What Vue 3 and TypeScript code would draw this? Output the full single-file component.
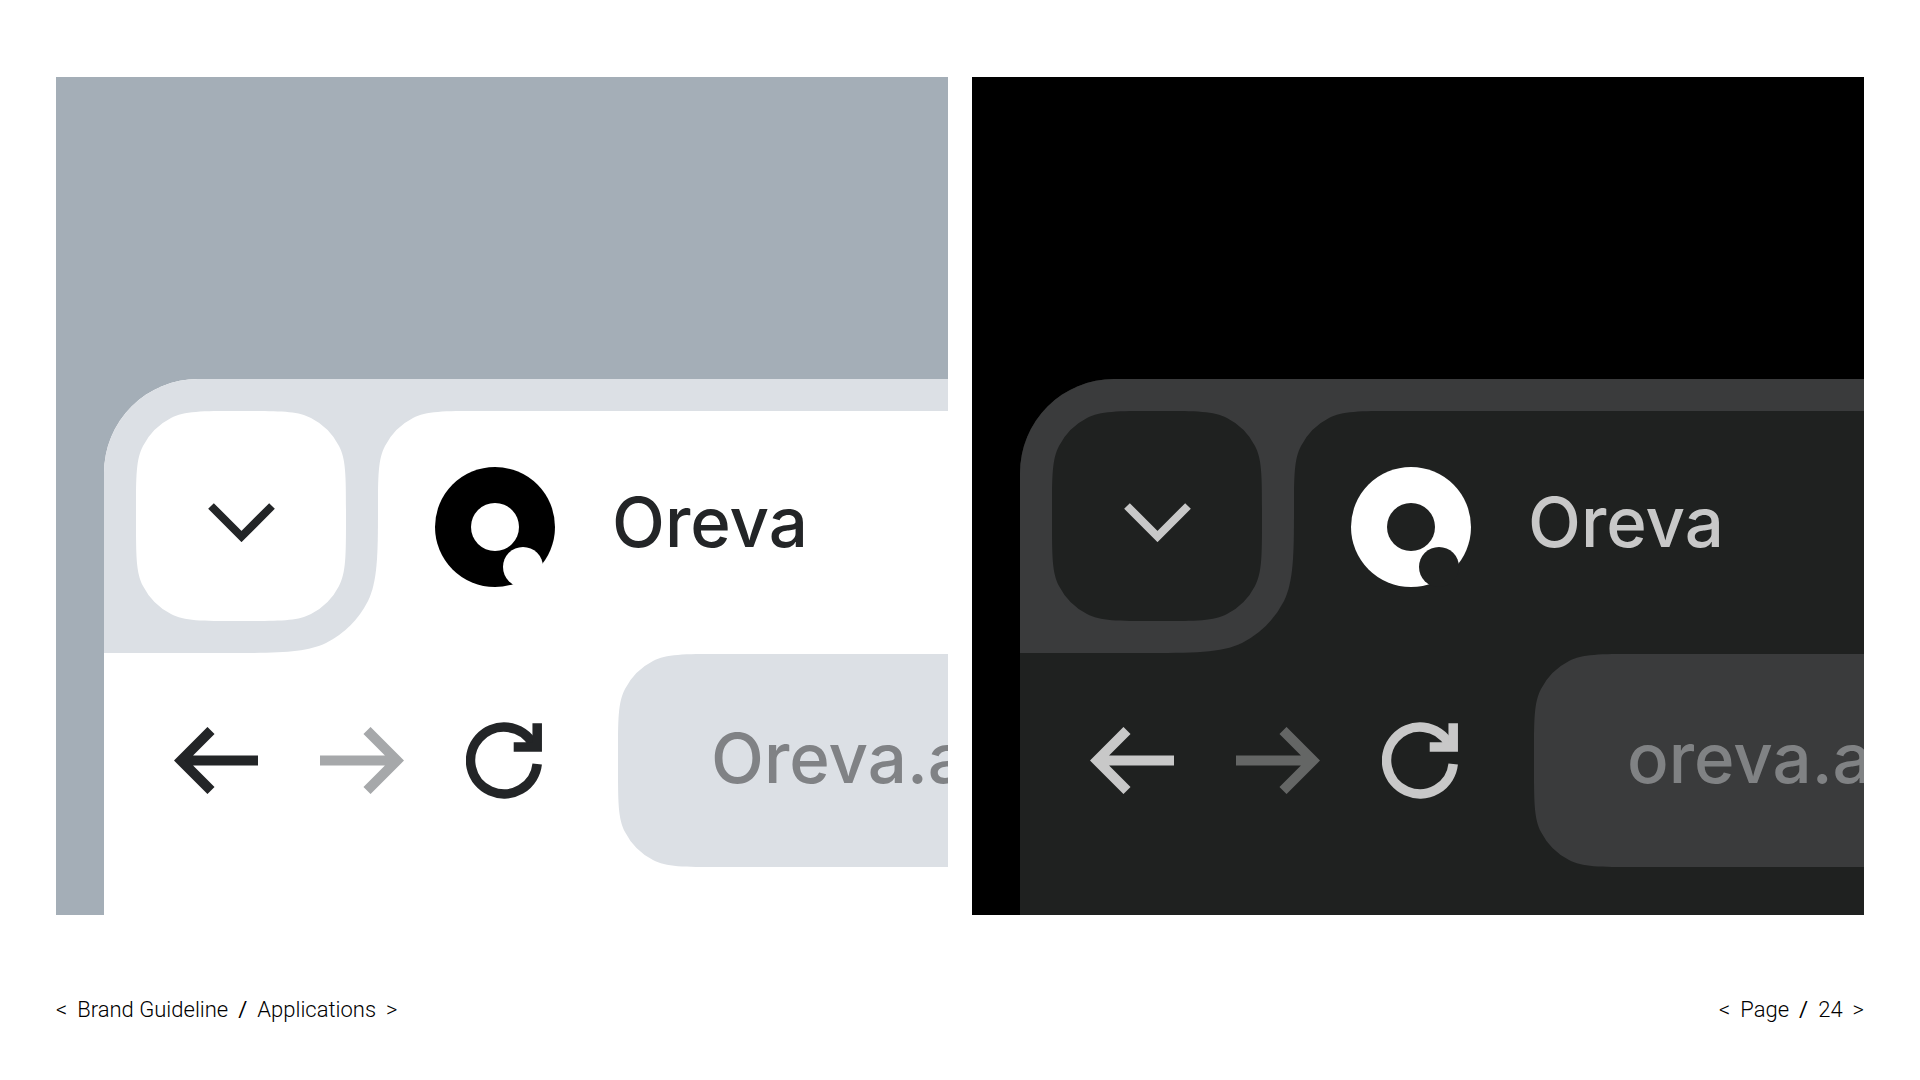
<script setup lang="ts">
interface Mockup {
  theme: 'light' | 'dark'
  title: string
  address: string
}

const mockups: Mockup[] = [
  { theme: 'light', title: 'Oreva', address: 'Oreva.a' },
  { theme: 'dark', title: 'Oreva', address: 'oreva.a' },
]
</script>

<template>
  <div class="page">
    <main class="panels">
      <section v-for="m in mockups" :key="m.theme" class="panel" :class="m.theme">
        <div class="window">
          <header class="strip">
            <div class="corner">
              <button class="menu" type="button" aria-label="Search tabs">
                <svg width="67" height="52" viewBox="0 0 67 52" fill="none" stroke="currentColor" stroke-width="8">
                  <path d="M3 16 33.500 46.500 64 16" />
                </svg>
              </button>
            </div>
            <div class="tab-area">
              <div class="tab">
                <svg class="logo" width="120" height="120" viewBox="0 0 120 120" aria-hidden="true">
                  <circle class="logo-disc" cx="60" cy="60" r="60" />
                  <circle class="logo-hole" cx="60" cy="60" r="24" />
                  <circle class="logo-hole" cx="88" cy="100" r="20" />
                </svg>
                <span class="title">{{ m.title }}</span>
              </div>
            </div>
          </header>
          <div class="toolbar">
            <button class="tool" type="button" aria-label="Back">
              <svg width="84" height="67" viewBox="0 0 84 67" fill="none" stroke="currentColor" stroke-width="10">
                <path d="M37 3.500 7 33.500l30 30M7 33.500h77" />
              </svg>
            </button>
            <button class="tool faded" type="button" aria-label="Forward">
              <svg width="84" height="67" viewBox="0 0 84 67" fill="none" stroke="currentColor" stroke-width="10">
                <path d="M47 3.500l30 30-30 30M77 33.500H0" />
              </svg>
            </button>
            <button class="tool" type="button" aria-label="Reload">
              <svg width="76" height="77" viewBox="0 0 76 77" fill="none" stroke="currentColor" stroke-width="9.500">
                <path d="M71.200 42A33.400 33.400 0 1 1 66.900 21.800" />
                <path d="M71.200 1.300V25H47.700" />
              </svg>
            </button>
            <input class="address" type="text" aria-label="Address" :value="m.address" />
          </div>
        </div>
      </section>
    </main>
    <footer class="footer">
      <nav class="crumbs" aria-label="Section">
        <span>&lt;</span>
        <a href="#guideline">Brand Guideline</a>
        <span class="slash">/</span>
        <a href="#applications">Applications</a>
        <span>&gt;</span>
      </nav>
      <div class="crumbs">
        <span>&lt;</span>
        <span>Page</span>
        <span class="slash">/</span>
        <span>24</span>
        <span>&gt;</span>
      </div>
    </footer>
  </div>
</template>

<style>
body {
  margin: 0;
  background: #fff;
}
</style>

<style scoped>
.page {
  box-sizing: border-box;
  min-height: 100vh;
  padding: 77px 56px 56px;
  display: flex;
  flex-direction: column;
}

.panels {
  flex: 1;
  display: grid;
  grid-template-columns: repeat(2, minmax(0, 1fr));
  gap: 24px;
}

.panel {
  display: flex;
  flex-direction: column;
  justify-content: flex-end;
  padding-left: 48px;
  overflow: hidden;
  background: var(--backdrop);
}

.light {
  --backdrop: #a4aeb7;
  --frame: #dce0e5;
  --surface: #fff;
  --ink: #232527;
  --faded: #a6a8aa;
  --muted: #808285;
  --logo: #000;
}

.dark {
  --backdrop: #000;
  --frame: #3a3b3c;
  --surface: #1f2120;
  --ink: #c8c8c8;
  --faded: #646665;
  --muted: #808284;
  --logo: #fff;
}

.window {
  overflow: hidden;
  border-top-left-radius: 94px;
  background: var(--surface);
  font-family: Inter, "Liberation Sans", sans-serif;
  font-weight: 500;
  color: var(--ink);
}

.strip {
  display: flex;
  height: 274px;
}

.corner {
  box-sizing: border-box;
  flex: none;
  width: 274px;
  padding: 32px;
  background: var(--frame);
  clip-path: path("M0 0H274V120C274 174 274 201 264 222A96 96 0 0 1 222 264C201 274 174 274 120 274H0Z");
}

button {
  display: grid;
  place-items: center;
  flex: none;
  padding: 0;
  border: 0;
  background: none;
  color: inherit;
}

svg {
  display: block;
}

.menu {
  width: 210px;
  height: 210px;
  background: var(--surface);
  clip-path: path("M0 102C0 66 0 48 7 35A64 64 0 0 1 35 7C48 0 66 0 102 0H108C144 0 162 0 175 7A64 64 0 0 1 203 35C210 48 210 66 210 102V108C210 144 210 162 203 175A64 64 0 0 1 175 203C162 210 144 210 108 210H102C66 210 48 210 35 203A64 64 0 0 1 7 175C0 162 0 144 0 108Z");
}

.tab-area {
  flex: 1;
  min-width: 0;
  display: flex;
  padding-top: 32px;
  background: var(--frame);
}

.tab {
  box-sizing: border-box;
  flex: 1;
  min-width: 0;
  display: flex;
  align-items: flex-start;
  gap: 57px;
  padding: 56px 0 0 57px;
  background: var(--surface);
  clip-path: path("M0 102C0 66 0 48 7 35A64 64 0 0 1 35 7C48 0 66 0 102 0H9999V242H0Z");
}

.logo {
  flex: none;
}

.logo-disc {
  fill: var(--logo);
}

.logo-hole {
  fill: var(--surface);
}

.title {
  font-size: 69px;
  line-height: 110px;
}

.toolbar {
  display: flex;
  align-items: center;
  gap: 62px;
  padding: 1px 0 48px 70px;
}

.faded {
  color: var(--faded);
}

.address {
  box-sizing: border-box;
  flex: 1;
  min-width: 0;
  height: 213px;
  margin-left: 14px;
  padding: 0 0 6px 93px;
  border: 0;
  border-radius: 0;
  outline: 0;
  background: var(--frame);
  color: var(--muted);
  font: inherit;
  font-size: 69px;
  clip-path: path("M0 102C0 66 0 48 7 35A64 64 0 0 1 35 7C48 0 66 0 102 0H9999V213H102C66 213 48 213 35 206A64 64 0 0 1 7 178C0 165 0 147 0 111Z");
}

.footer {
  display: flex;
  justify-content: space-between;
  padding-top: 80px;
  font-family: Roboto, "Liberation Sans", sans-serif;
  font-size: 22px;
  font-weight: 300;
  line-height: 29px;
  color: #000;
}

.crumbs {
  display: flex;
  gap: 10px;
}

.crumbs a {
  color: inherit;
  text-decoration: none;
}

.slash {
  font-weight: 400;
}
</style>
